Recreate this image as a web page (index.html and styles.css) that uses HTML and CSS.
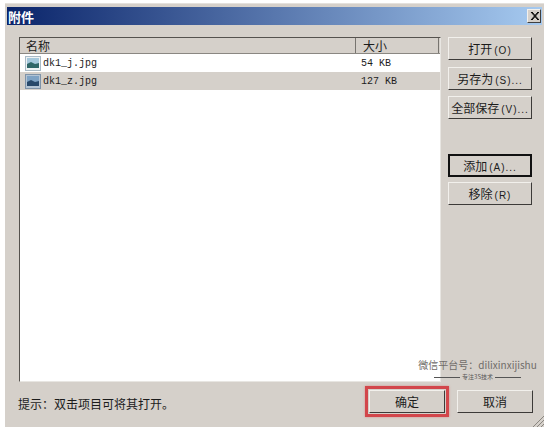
FILE: index.html
```html
<!DOCTYPE html>
<html lang="zh-CN">
<head>
  <meta charset="UTF-8" />
  <meta name="viewport" content="width=device-width, initial-scale=1.0" />
  <title>附件</title>
  <link rel="stylesheet" href="styles.css">
</head>
<body>

<div class="dialog">
  <!-- title bar -->
  <div class="titlebar">
    <span class="title">附件</span>
    <button class="close-btn" aria-label="关闭">
      <svg width="9" height="8" viewBox="0 0 9 8"><path d="M1 0 L8 8 M2 0 L9 8 M8 0 L1 8 M9 0 L2 8" stroke="#000" stroke-width="1"/></svg>
    </button>
  </div>

  <!-- main area -->
  <div class="main">
    <div class="list">
      <div class="list-head">
        <div class="col-name">名称</div>
        <div class="col-size">大小</div>
      </div>
      <div class="row">
        <svg class="file-icon" width="16" height="15" viewBox="0 0 16 15">
          <rect x="0.5" y="0.5" width="15" height="14" fill="#eef2f4" stroke="#a9bac6"/>
          <rect x="2" y="2" width="12" height="10" fill="#a5c8dc"/>
          <path d="M2 8 L6 6 L10 8 L14 7 L14 12 L2 12 Z" fill="#2f6668"/>
        </svg>
        <span class="name">dk1_j.jpg</span>
        <span class="size">54 KB</span>
      </div>
      <div class="row selected">
        <svg class="file-icon" width="16" height="15" viewBox="0 0 16 15">
          <rect x="0.5" y="0.5" width="15" height="14" fill="#b4c4d4" stroke="#7f93a8"/>
          <rect x="2" y="2" width="12" height="10" fill="#7ea2c4"/>
          <path d="M2 8 L6 6 L10 8 L14 7 L14 12 L2 12 Z" fill="#27486a"/>
        </svg>
        <span class="name">dk1_z.jpg</span>
        <span class="size">127 KB</span>
      </div>
    </div>

    <!-- side buttons -->
    <div class="side">
      <button class="btn btn-first">打开<span class="key">(O)</span></button>
      <button class="btn">另存为<span class="key">(S)...</span></button>
      <button class="btn">全部保存<span class="key">(V)...</span></button>
      <button class="btn btn-default">添加<span class="key">(A)...</span></button>
      <button class="btn btn-last">移除<span class="key">(R)</span></button>
    </div>
  </div>

  <!-- footer -->
  <div class="footer">
    <span class="hint">提示：双击项目可将其打开。</span>
    <div class="footer-btns">
      <div class="ok-mark"><button class="btn btn-foot">确定</button></div>
      <button class="btn btn-foot">取消</button>
    </div>
  </div>

  <svg class="grip" width="12" height="12" viewBox="0 0 12 12">
    <path d="M1 12 L12 1 M5 12 L12 5 M9 12 L12 9" stroke="#8a8680" stroke-width="1"/>
  </svg>

  <!-- watermark -->
  <div class="watermark">
    <div class="wm-top">微信平台号：dilixinxijishu</div>
    <div class="wm-sub"><i></i><span>专注3S技术</span><i></i></div>
  </div>
</div>

</body>
</html>
```

FILE: styles.css
```css
/* ─── page base ─────────────────────────────────────────── */
html, body {
  height: 100%;
}

body {
  margin: 0;
  background: #fff;
  font-family: "Noto Sans CJK SC", "Liberation Sans", sans-serif;
  font-size: 12px;
  color: #1c1c1c;
  overflow: hidden;
}

/* ─── dialog ────────────────────────────────────────────── */
.dialog {
  position: relative;
  box-sizing: border-box;
  width: 539px;
  height: 424px;
  margin: 3px 0 0 5px;
  padding: 3px 2px 0 2px;
  background: #d5d0ca;
  border-top: 1px solid #e4e1dd;
  display: flex;
  flex-direction: column;
}

.titlebar {
  height: 18px;
  flex: none;
  display: flex;
  align-items: center;
  justify-content: space-between;
  padding: 0 1px 0 1px;
  background: linear-gradient(to right, #0a246a, #a6caf0);
}

.title {
  color: #fff;
  font-size: 13px;
  font-weight: 700;
}

.close-btn {
  width: 14px;
  height: 14px;
  padding: 0;
  display: flex;
  align-items: center;
  justify-content: center;
  background: #d5d0ca;
  border: 1px solid;
  border-color: #f2f0ec #404040 #404040 #f2f0ec;
}

/* ─── list + side buttons ───────────────────────────────── */
.main {
  flex: 1;
  display: flex;
  padding: 12px 0 0 12px;
  min-height: 0;
}

.list {
  width: 422px;
  height: 345px;
  box-sizing: border-box;
  background: #fff;
  border: 1px solid;
  border-color: #55524e #e8e6e2 #e8e6e2 #55524e;
}

.list-head {
  display: flex;
  height: 15px;
  background: #d5d0ca;
  border-bottom: 1px solid #8a8782;
  font-size: 12px;
  line-height: 15px;
}

.col-name {
  width: 336px;
  padding-left: 6px;
  box-sizing: border-box;
  border-right: 1px solid #77746f;
}

.col-size {
  width: 83px;
  box-sizing: border-box;
  padding-left: 7px;
  border-right: 1px solid #77746f;
}

.row {
  display: flex;
  align-items: center;
  height: 18px;
  font-family: "Liberation Mono", monospace;
  font-size: 10px;
}

.row.selected {
  background: #d5d0ca;
}

.file-icon {
  margin-left: 5px;
  flex: none;
}

.name {
  width: 315px;
  padding: 1px 0 0 2px;
}

.size {
  padding: 1px 0 0 3px;
}

.side {
  margin-left: 7px;
  display: flex;
  flex-direction: column;
  gap: 6px;
}

/* ─── buttons ───────────────────────────────────────────── */
.btn {
  width: 84px;
  height: 23px;
  padding: 0;
  box-sizing: border-box;
  background: #d5d0ca;
  border: 1px solid;
  border-color: #f2f0ec #3c3a38 #3c3a38 #f2f0ec;
  font-family: inherit;
  font-size: 12px;
  color: #1c1c1c;
  white-space: nowrap;
}

.key {
  margin-left: 2px;
  font-family: "Liberation Sans", sans-serif;
  font-size: 10px;
  letter-spacing: 1px;
}

.btn-first {
  margin-bottom: 1px;
}

.btn-default {
  margin-top: 29px;
  border: 2px solid #111;
}

.btn-last {
  margin-top: -1px;
}

/* ─── footer ────────────────────────────────────────────── */
.footer {
  height: 45px;
  box-sizing: border-box;
  flex: none;
  display: flex;
  align-items: center;
  justify-content: space-between;
  padding: 0 9px 6px 11px;
}

.hint {
  margin-top: 3px;
  font-size: 12px;
}

.footer-btns {
  display: flex;
  align-items: center;
  gap: 8px;
}

.ok-mark {
  padding: 1px;
  display: flex;
  border: 3px solid #d2464b;
  box-shadow: 0 0 2px rgba(220, 80, 80, 0.5);
}

.btn-foot {
  width: 76px;
}

.grip {
  position: absolute;
  right: 0;
  bottom: 0;
}

/* ─── watermark ─────────────────────────────────────────── */
.watermark {
  position: absolute;
  left: 412px;
  top: 354px;
  width: 121px;
  color: #6f6c69;
  text-align: center;
}

.wm-top {
  font-size: 10px;
  line-height: 14px;
  white-space: nowrap;
}

.wm-sub {
  display: flex;
  align-items: center;
  justify-content: center;
  gap: 2px;
  font-size: 6px;
  line-height: 10px;
  color: #555;
}

.wm-sub i {
  width: 26px;
  height: 1px;
  background: #555;
}
```
